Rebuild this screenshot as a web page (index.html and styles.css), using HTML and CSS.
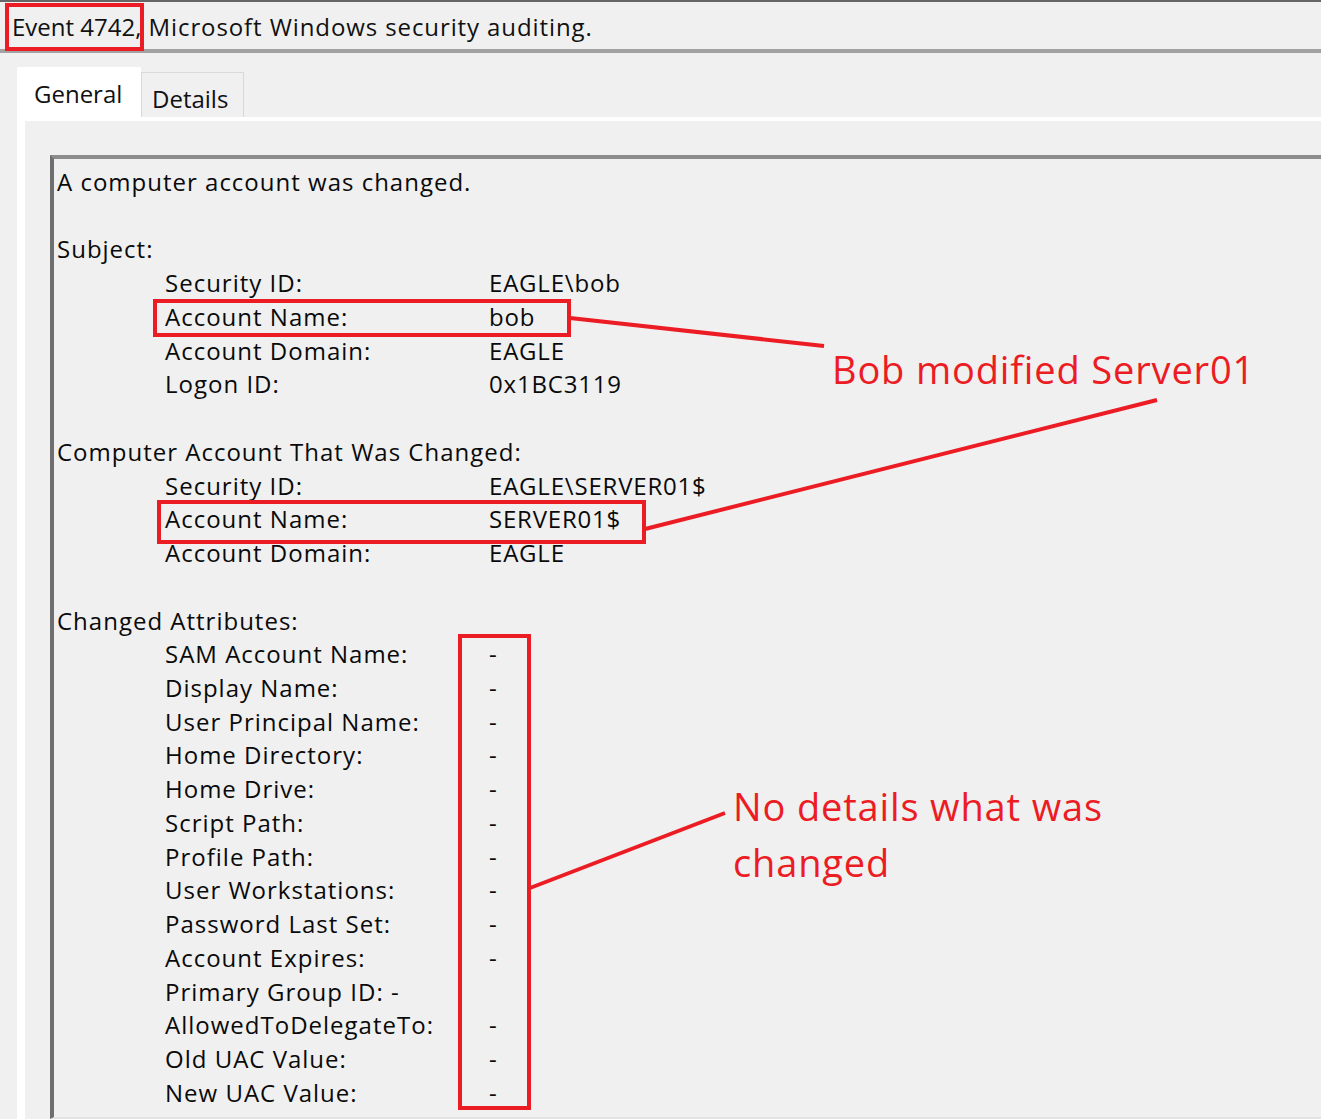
FILE: index.html
```html
<!DOCTYPE html>
<html lang="en">
<head>
<meta charset="utf-8">
<title>Event 4742</title>
<link rel="stylesheet" href="styles.css">
</head>
<body>
<div class="page">
  <header class="title"><span class="title-id">Event 4742,</span> Microsoft Windows security auditing.</header>
  <div class="tabctl">
    <div class="tabstrip">
      <div class="tab tab-active">General</div>
      <div class="tab tab-idle">Details</div>
    </div>
    <div class="tabpage">
      <div class="textbox">
        <div class="line">A computer account was changed.</div>
        <div class="line"></div>
        <div class="line">Subject:</div>
        <div class="kv"><span class="k">Security ID:</span><span class="v">EAGLE\bob</span></div>
        <div class="kv"><span class="k">Account Name:</span><span class="v">bob</span></div>
        <div class="kv"><span class="k">Account Domain:</span><span class="v">EAGLE</span></div>
        <div class="kv"><span class="k">Logon ID:</span><span class="v">0x1BC3119</span></div>
        <div class="line"></div>
        <div class="line">Computer Account That Was Changed:</div>
        <div class="kv"><span class="k">Security ID:</span><span class="v">EAGLE\SERVER01$</span></div>
        <div class="kv"><span class="k">Account Name:</span><span class="v">SERVER01$</span></div>
        <div class="kv"><span class="k">Account Domain:</span><span class="v">EAGLE</span></div>
        <div class="line"></div>
        <div class="line">Changed Attributes:</div>
        <div class="kv"><span class="k">SAM Account Name:</span><span class="v">-</span></div>
        <div class="kv"><span class="k">Display Name:</span><span class="v">-</span></div>
        <div class="kv"><span class="k">User Principal Name:</span><span class="v">-</span></div>
        <div class="kv"><span class="k">Home Directory:</span><span class="v">-</span></div>
        <div class="kv"><span class="k">Home Drive:</span><span class="v">-</span></div>
        <div class="kv"><span class="k">Script Path:</span><span class="v">-</span></div>
        <div class="kv"><span class="k">Profile Path:</span><span class="v">-</span></div>
        <div class="kv"><span class="k">User Workstations:</span><span class="v">-</span></div>
        <div class="kv"><span class="k">Password Last Set:</span><span class="v">-</span></div>
        <div class="kv"><span class="k">Account Expires:</span><span class="v">-</span></div>
        <div class="kv"><span class="k">Primary Group ID: -</span><span class="v"></span></div>
        <div class="kv"><span class="k">AllowedToDelegateTo:</span><span class="v">-</span></div>
        <div class="kv"><span class="k">Old UAC Value:</span><span class="v">-</span></div>
        <div class="kv"><span class="k">New UAC Value:</span><span class="v">-</span></div>
      </div>
    </div>
  </div>

  <svg class="callout-lines" width="1321" height="1119" viewBox="0 0 1321 1119" aria-hidden="true">
    <line x1="570" y1="318" x2="824" y2="346"/>
    <line x1="645" y1="529" x2="1157" y2="400"/>
    <line x1="530" y1="888" x2="725" y2="813"/>
  </svg>
  <div class="mark mark-event"></div>
  <div class="mark mark-subject"></div>
  <div class="mark mark-computer"></div>
  <div class="mark mark-dashes"></div>
  <div class="note note-bob">Bob modified Server01</div>
  <div class="note note-nodetails">No details what was<br>changed</div>
</div>
</body>
</html>
```

FILE: styles.css
```css
html, body {
  margin: 0;
  padding: 0;
  background: #f0f0f0;
}
body {
  font-family: "Open Sans", "Noto Sans", sans-serif;
  color: #000;
}
.page {
  position: relative;
  width: 1321px;
  height: 1119px;
  overflow: hidden;
  background: #f0f0f0;
}
.title {
  height: 47px;
  border-top: 2px solid #666;
  border-bottom: 4px solid #a2a2a2;
  box-sizing: content-box;
  padding-left: 12px;
  font-size: 24px;
  line-height: 49px;
  letter-spacing: 0.9px;
  color: #111;
  white-space: nowrap;
}
.title-id {
  letter-spacing: 0;
}
.tabctl {
  margin-left: 17px;
  margin-top: 14px;
}
.tabstrip {
  display: flex;
  align-items: flex-end;
  height: 50px;
}
.tab {
  box-sizing: border-box;
  font-size: 24px;
  white-space: nowrap;
  color: #111;
}
.tab-active {
  width: 124px;
  height: 50px;
  background: #fff;
  padding-left: 17px;
  line-height: 54px;
}
.tab-idle {
  width: 103px;
  height: 45px;
  background: #f0f0f0;
  border: 1px solid #d9d9d9;
  border-bottom: none;
  padding-left: 10px;
  line-height: 51px;
}
.tabpage {
  border-top: 4px solid #fff;
  border-left: 8px solid #fff;
  background: #f0f0f0;
  padding: 34px 0 0 25px;
  height: 1000px;
}
.textbox {
  width: 1400px;
  height: 952px;
  border-top: 4px solid #8c8c8c;
  border-left: 4px solid #6e6e6e;
  border-bottom: 2px solid #e3e3e3;
  padding: 6px 0 0 3px;
  font-size: 24px;
  line-height: 33.74px;
  letter-spacing: 1px;
  color: #0a0a0a;
}
.line {
  height: 33.74px;
  white-space: nowrap;
}
.kv {
  display: grid;
  grid-template-columns: 324px auto;
  padding-left: 108px;
  height: 33.74px;
  white-space: nowrap;
}
.v {
  letter-spacing: 0.8px;
}
.callout-lines {
  position: absolute;
  left: 0;
  top: 0;
  pointer-events: none;
}
.callout-lines line {
  stroke: #ec1c24;
  stroke-width: 4;
}
.mark {
  position: absolute;
  box-sizing: border-box;
  border: 4px solid #ec1c24;
}
.mark-event { left: 5px; top: 3px; width: 139px; height: 48px; }
.mark-subject { left: 153px; top: 299px; width: 418px; height: 38px; }
.mark-computer { left: 157px; top: 500px; width: 489px; height: 44px; }
.mark-dashes { left: 458px; top: 634px; width: 73px; height: 476px; }
.note {
  position: absolute;
  color: #ec1c24;
  font-size: 38px;
  line-height: 56px;
  letter-spacing: 0.85px;
  white-space: nowrap;
}
.note-bob { left: 832px; top: 341px; }
.note-nodetails { left: 733px; top: 778px; }
```
